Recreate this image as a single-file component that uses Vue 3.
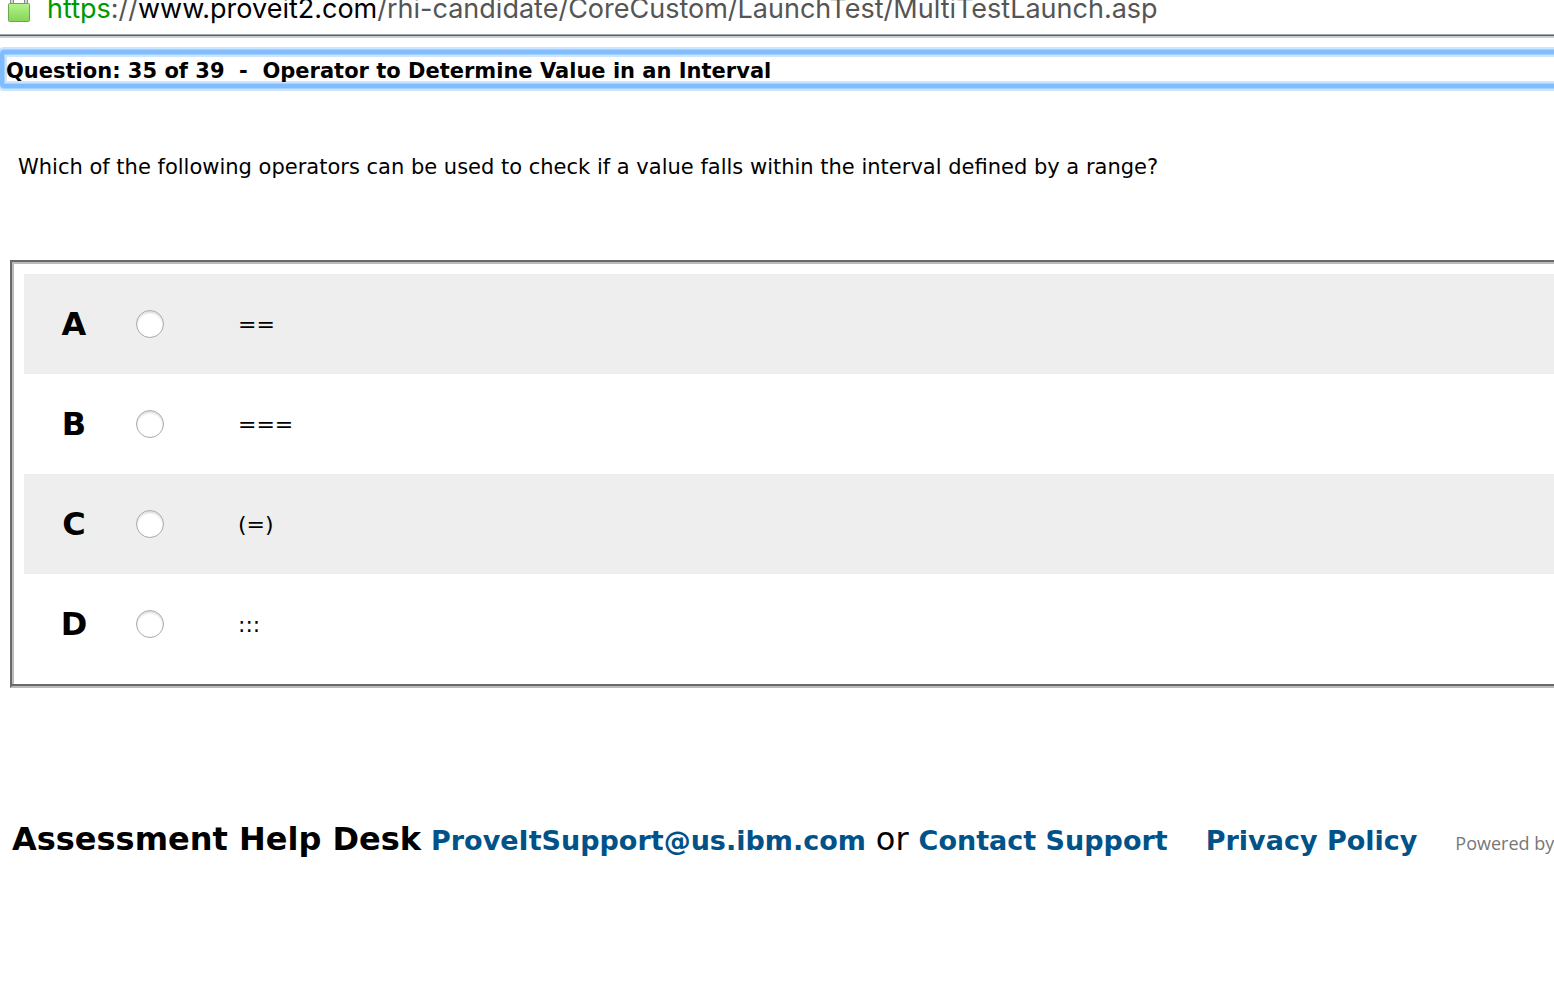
<script setup>
import { ref } from 'vue'

const selected = ref(null)
const options = [
  { key: 'A', text: '==' },
  { key: 'B', text: '===' },
  { key: 'C', text: '(=)' },
  { key: 'D', text: ':::' },
]
</script>

<template>
  <div class="page">
    <header class="address">
      <svg class="lock" width="24" height="34" viewBox="0 0 24 34" aria-hidden="true">
        <defs>
          <linearGradient id="lockBody" x1="0" y1="0" x2="0" y2="1">
            <stop offset="0" stop-color="#b4f48c" />
            <stop offset="1" stop-color="#85d455" />
          </linearGradient>
        </defs>
        <path d="M5 17V9a7 7 0 0 1 14 0v8" fill="none" stroke="#8b8b8b" stroke-width="4" />
        <path d="M5 17V9a7 7 0 0 1 14 0v8" fill="none" stroke="#d4d4d4" stroke-width="2" />
        <rect x="1.5" y="15.5" width="21" height="18" rx="1" fill="url(#lockBody)" stroke="#6aa84f" />
      </svg>
      <span class="url"><span class="scheme">https</span>://<span class="host">www.proveit2.com</span>/rhi-candidate/CoreCustom/LaunchTest/MultiTestLaunch.asp</span>
    </header>

    <main>
      <h1 class="title">Question: 35 of 39 &nbsp;-&nbsp; Operator to Determine Value in an Interval</h1>
      <p id="prompt" class="prompt">Which of the following operators can be used to check if a value falls within the interval defined by a range?</p>

      <div class="answers" role="radiogroup" aria-labelledby="prompt">
        <label v-for="option in options" :key="option.key" class="row">
          <span class="letter">{{ option.key }}</span>
          <input v-model="selected" class="radio" type="radio" name="answer" :value="option.key" />
          <span class="text">{{ option.text }}</span>
        </label>
      </div>
    </main>

    <footer class="footer">
      <strong class="desk">Assessment Help Desk</strong>
      <a href="#support">ProveItSupport@us.ibm.com</a>
      <span class="or">or</span>
      <a href="#contact">Contact Support</a>
      <a class="privacy" href="#privacy">Privacy Policy</a>
      <span class="powered">Powered by</span>
    </footer>
  </div>
</template>

<style>
body {
  margin: 0;
  background: #fff;
}
</style>

<style scoped>
.page {
  overflow: hidden;
  min-height: 100vh;
  font-family: Verdana, "DejaVu Sans", sans-serif;
  color: #000;
}
.address {
  display: flex;
  align-items: flex-end;
  gap: 16px;
  height: 34px;
  padding-left: 7px;
  border-bottom: 1px solid #a3a9b5;
  box-shadow: 0 1px 0 #5b5c62, 0 3px 0 #d0d0d0;
}
.lock {
  flex: none;
  margin-bottom: 12px;
}
.url {
  margin-bottom: 8px;
  font-family: Inter, sans-serif;
  font-size: 27px;
  line-height: 34px;
  white-space: nowrap;
  color: #555;
}
.scheme {
  color: #090;
}
.host {
  color: #000;
}
.title {
  margin: 15px -10px 0 0;
  padding: 4px 2px 0;
  border: 4px solid #80bdff;
  border-radius: 4px;
  box-shadow: 0 0 0 1px #a6d1ff, 0 0 0 3px #cce4ff, inset 0 0 0 1px #a6d1ff, inset 0 0 0 3px #cce4ff;
  font-size: 21px;
  line-height: 26px;
  font-weight: bold;
  white-space: nowrap;
}
.prompt {
  margin: 65px 18px 0;
  font-size: 21px;
  line-height: 28px;
}
.answers {
  margin: 79px -20px 0 10px;
  padding: 12px;
  border: 2px solid #696969;
  border-bottom-color: #bbb;
  box-shadow: inset 0 -2px 0 #696969, inset 0 0 0 2px #bbb;
}
.row {
  display: flex;
  align-items: center;
  height: 100px;
}
.row:nth-child(odd) {
  background: #eee;
}
.letter {
  width: 100px;
  font-size: 32px;
  font-weight: bold;
  text-align: center;
}
.radio {
  appearance: none;
  box-sizing: border-box;
  width: 28px;
  height: 28px;
  margin: 0 74px 0 12px;
  border: 1px solid #aaa;
  border-radius: 50%;
  background: #fff;
  box-shadow: inset 0 2px 2px #ddd;
}
.radio:checked {
  background: radial-gradient(circle, #333 5px, #fff 6px);
}
.text {
  font-size: 22px;
}
.footer {
  display: flex;
  align-items: baseline;
  gap: 10px;
  margin: 131px 0 0 12px;
  line-height: 40px;
  white-space: nowrap;
}
.desk,
.or {
  font-size: 32px;
}
.footer a {
  font-size: 27px;
  font-weight: bold;
  color: #005288;
  text-decoration: none;
}
.footer .privacy {
  margin: 0 28px;
}
.powered {
  font-family: "Open Sans", sans-serif;
  font-size: 18px;
  color: #777;
}
</style>
